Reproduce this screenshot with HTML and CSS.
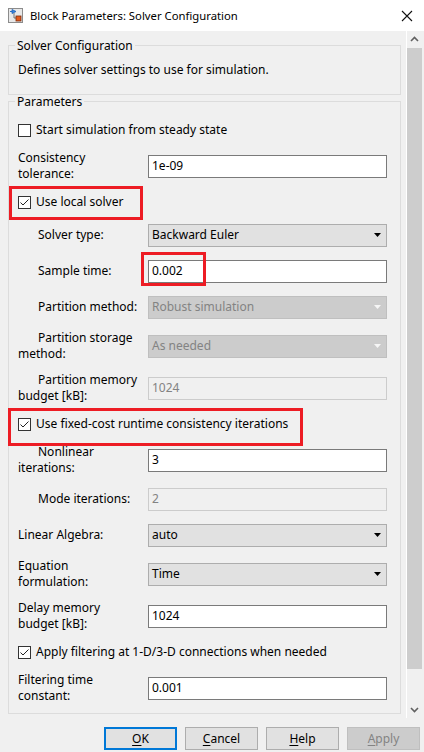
FILE: index.html
```html
<!DOCTYPE html>
<html>
<head>
<meta charset="utf-8">
<link rel="stylesheet" href="styles.css">
</head>
<body>
<div class="window">
  <div class="titlebar">
    <svg class="app-icon" width="16" height="16" viewBox="0 0 16 16">
      <rect x="0.5" y="0.5" width="14" height="14" fill="#e8e8e8" stroke="#8c8c8c"/>
      <path d="M2 3.5 H4" stroke="#2a6fc9" stroke-width="1"/>
      <path d="M4 1.5 L8 3.5 L4 5.5 Z" fill="#3a86e0" stroke="#1c5fb5" stroke-width="0.8"/>
      <path d="M6 5 V10 H8" stroke="#555" stroke-width="0.8" fill="none"/>
      <rect x="8" y="8" width="5" height="5" fill="#e25a1c" stroke="#7a2a0a" stroke-width="0.8"/>
    </svg>
    <span class="title">Block Parameters: Solver Configuration</span>
    <svg class="close" width="12" height="12" viewBox="0 0 12 12">
      <path d="M1 1 L11 11 M11 1 L1 11" stroke="#111" stroke-width="1.1"/>
    </svg>
  </div>

  <div class="main">
    <div class="content">
      <fieldset class="group g1">
        <legend>Solver Configuration</legend>
        <div class="desc">Defines solver settings to use for simulation.</div>
      </fieldset>

      <fieldset class="group g2">
        <legend>Parameters</legend>
        <div class="rows">
          <div class="check-row">
            <span class="cb"></span><span>Start simulation from steady state</span>
          </div>

          <div class="field">
            <div class="label two">Consistency<br>tolerance:</div>
            <div class="input">1e-09</div>
          </div>

          <div class="check-row hl-local">
            <span class="cb checked"><svg width="13" height="13" viewBox="0 0 13 13"><path d="M2.5 6.5 L5 9 L10.5 3.5" stroke="#222" stroke-width="1" fill="none"/></svg></span><span>Use local solver</span>
          </div>

          <div class="field">
            <div class="label ind">Solver type:</div>
            <div class="select">Backward Euler<svg class="arrow" width="7" height="4" viewBox="0 0 7 4"><path d="M0 0 H7 L3.5 4 Z" fill="#000"/></svg></div>
          </div>

          <div class="field">
            <div class="label ind">Sample time:</div>
            <div class="input marked">0.002<span class="mark"></span></div>
          </div>

          <div class="field">
            <div class="label ind">Partition method:</div>
            <div class="select disabled">Robust simulation<svg class="arrow" width="7" height="4" viewBox="0 0 7 4"><path d="M0 0 H7 L3.5 4 Z" fill="#f6f6f6"/></svg></div>
          </div>

          <div class="field">
            <div class="label ind two">Partition storage<br>method:</div>
            <div class="select disabled">As needed<svg class="arrow" width="7" height="4" viewBox="0 0 7 4"><path d="M0 0 H7 L3.5 4 Z" fill="#f6f6f6"/></svg></div>
          </div>

          <div class="field">
            <div class="label ind two">Partition memory<br>budget [kB]:</div>
            <div class="input disabled">1024</div>
          </div>

          <div class="check-row hl-fixed">
            <span class="cb checked"><svg width="13" height="13" viewBox="0 0 13 13"><path d="M2.5 6.5 L5 9 L10.5 3.5" stroke="#222" stroke-width="1" fill="none"/></svg></span><span>Use fixed-cost runtime consistency iterations</span>
          </div>

          <div class="field">
            <div class="label ind two">Nonlinear<br>iterations:</div>
            <div class="input">3</div>
          </div>

          <div class="field">
            <div class="label ind">Mode iterations:</div>
            <div class="input disabled">2</div>
          </div>

          <div class="field">
            <div class="label">Linear Algebra:</div>
            <div class="select">auto<svg class="arrow" width="7" height="4" viewBox="0 0 7 4"><path d="M0 0 H7 L3.5 4 Z" fill="#000"/></svg></div>
          </div>

          <div class="field">
            <div class="label two">Equation<br>formulation:</div>
            <div class="select">Time<svg class="arrow" width="7" height="4" viewBox="0 0 7 4"><path d="M0 0 H7 L3.5 4 Z" fill="#000"/></svg></div>
          </div>

          <div class="field">
            <div class="label two">Delay memory<br>budget [kB]:</div>
            <div class="input">1024</div>
          </div>

          <div class="check-row">
            <span class="cb checked"><svg width="13" height="13" viewBox="0 0 13 13"><path d="M2.5 6.5 L5 9 L10.5 3.5" stroke="#222" stroke-width="1" fill="none"/></svg></span><span>Apply filtering at 1-D/3-D connections when needed</span>
          </div>

          <div class="field">
            <div class="label two">Filtering time<br>constant:</div>
            <div class="input">0.001</div>
          </div>
        </div>
      </fieldset>
    </div>

    <div class="scrollbar">
      <svg class="sb-arrow" width="15" height="17" viewBox="0 0 15 17"><path d="M4 10 L7.5 6.5 L11 10" stroke="#606060" stroke-width="1.6" fill="none"/></svg>
      <div class="thumb"></div>
      <div class="track"></div>
      <svg class="sb-arrow" width="15" height="17" viewBox="0 0 15 17"><path d="M4 7 L7.5 10.5 L11 7" stroke="#606060" stroke-width="1.6" fill="none"/></svg>
    </div>
  </div>

  <div class="buttons">
    <div class="btn default"><u>O</u>K</div>
    <div class="btn"><u>C</u>ancel</div>
    <div class="btn"><u>H</u>elp</div>
    <div class="btn disabled"><u>A</u>pply</div>
  </div>
</div>
</body>
</html>
```

FILE: styles.css
```css
* { box-sizing: border-box; }
html, body { margin: 0; padding: 0; }
body {
  font-family: "Noto Sans", "Liberation Sans", sans-serif;
  font-size: 12px;
  color: #000;
  background: #f0f0f0;
}
.window {
  width: 424px;
  height: 752px;
  display: flex;
  flex-direction: column;
  background: #f0f0f0;
  overflow: hidden;
}
.titlebar {
  height: 31px;
  flex: none;
  background: #fff;
  display: flex;
  align-items: center;
  padding-left: 8px;
}
.app-icon { flex: none; margin-top: 1px; }
.title {
  margin-left: 6px;
  flex: 1;
  font-size: 11.3px;
  line-height: 16px;
}
.close { flex: none; margin-right: 11px; }

.main {
  height: 687px;
  flex: none;
  display: flex;
}
.content {
  width: 407px;
  flex: none;
  border-right: 1px solid #fff;
  padding: 8px 5px 0 8px;
  overflow: hidden;
}
.group {
  margin: 0;
  border: 1px solid #dcdcdc;
  padding: 0 13px 0 9px;
  min-width: 0;
}
.group legend {
  padding: 0 2px;
  margin-left: -3px;
  line-height: 13px;
  font-size: 12px;
}
.g1 { padding-top: 10px; padding-bottom: 16px; }
.desc { line-height: 16px; }
.g2 { padding-top: 13px; padding-bottom: 10px; }

.rows {
  display: flex;
  flex-direction: column;
  gap: 12px;
}
.check-row {
  height: 18px;
  display: flex;
  align-items: center;
  gap: 5px;
  position: relative;
  line-height: 18px;
}
.cb {
  width: 13px;
  height: 13px;
  flex: none;
  border: 1px solid #333;
  background: #fff;
  display: block;
}
.cb.checked {
  border: none;
  box-shadow: inset 0 0 0 1px #333;
}
.cb.checked svg { display: block; }

.hl-local::after,
.hl-fixed::after,
.mark {
  content: "";
  position: absolute;
  border: 3px solid #ed1c24;
  pointer-events: none;
}
.hl-local::after { left: -9px; top: -7px; width: 128px; height: 28px; }
.hl-fixed::after { left: -10px; top: -7px; width: 289px; height: 32px; }

.field {
  min-height: 24px;
  display: flex;
  align-items: center;
}
.label {
  width: 130px;
  flex: none;
  line-height: 16px;
}
.label.two { margin: -1px 0; }
.label.ind { text-indent: 20px; }

.input, .select {
  width: 239px;
  height: 23px;
  flex: none;
  display: flex;
  align-items: center;
  padding-left: 3px;
  line-height: 16px;
  position: relative;
}
.input {
  background: #fff;
  border: 1px solid #7a7a7a;
}
.input.disabled {
  background: #f0f0f0;
  border-color: #cccccc;
  color: #838383;
}
.select {
  background: #e1e1e1;
  border: 1px solid #adadad;
  justify-content: space-between;
  padding-right: 5px;
}
.select.disabled {
  background: #cccccc;
  border-color: #bfbfbf;
  color: #838383;
}
.arrow { flex: none; }
.mark { left: -8px; top: -9px; width: 65px; height: 34px; }

.scrollbar {
  width: 17px;
  flex: none;
  display: flex;
  flex-direction: column;
  padding-right: 2px;
}
.sb-arrow { flex: none; display: block; }
.thumb {
  height: 621px;
  flex: none;
  background: #cdcdcd;
}
.track { flex: 1; }

.buttons {
  flex: 1;
  display: flex;
  justify-content: flex-end;
  align-items: flex-start;
  gap: 8px;
  padding: 9px 4px 0 0;
}
.btn {
  width: 73px;
  height: 23px;
  border: 1px solid #adadad;
  background: #e1e1e1;
  display: flex;
  align-items: center;
  justify-content: center;
  line-height: 16px;
}
.btn.default { border: 2px solid #0078d7; }
.btn.disabled {
  background: #cccccc;
  border-color: #bfbfbf;
  color: #838383;
}
.btn u { text-decoration-thickness: 1px; text-underline-offset: 2px; }
```
